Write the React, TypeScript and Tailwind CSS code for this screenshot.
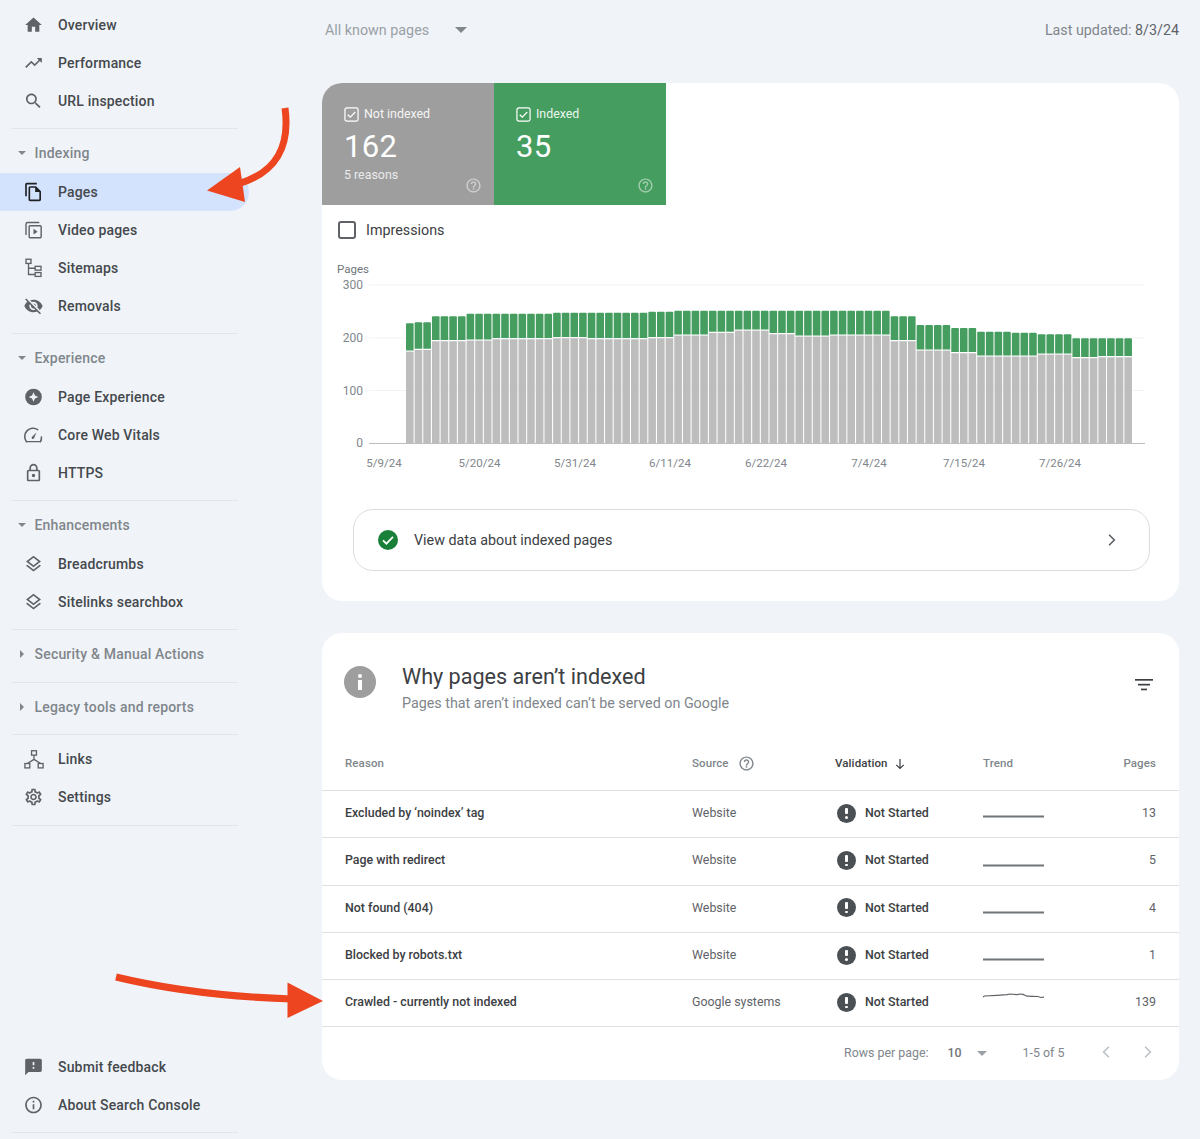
import React from "react";

const P: Record<string, string> = {
  home: "M10 20v-6h4v6h5v-8h3L12 3 2 12h3v8z",
  trend: "M16 6l2.29 2.29-4.88 4.88-4-4L2 16.59 3.41 18l6-6 4 4 6.3-6.29L22 12V6z",
  search: "M15.5 14h-.79l-.28-.27C15.41 12.59 16 11.11 16 9.5 16 5.91 13.09 3 9.5 3S3 5.91 3 9.5 5.91 16 9.5 16c1.61 0 3.09-.59 4.23-1.57l.27.28v.79l5 4.99L20.49 19l-4.99-5zm-6 0C7.01 14 5 11.99 5 9.5S7.01 5 9.5 5 14 7.01 14 9.5 11.99 14 9.5 14z",
  pages: "M16 1H4c-1.1 0-2 .9-2 2v14h2V3h12V1zm-1 4H8c-1.1 0-1.99.9-1.99 2L6 21c0 1.1.89 2 1.99 2H19c1.1 0 2-.9 2-2V11l-6-6zM8 21V7h6v5h5v9H8z",
  off: "M12 7c2.76 0 5 2.24 5 5 0 .65-.13 1.26-.36 1.83l2.92 2.92c1.51-1.26 2.7-2.89 3.43-4.75-1.73-4.39-6-7.5-11-7.5-1.4 0-2.74.25-3.98.7l2.16 2.16C10.74 7.13 11.35 7 12 7zM2 4.27l2.28 2.28.46.46C3.08 8.3 1.78 10.02 1 12c1.73 4.39 6 7.5 11 7.5 1.55 0 3.03-.3 4.38-.84l.42.42L19.73 22 21 20.73 3.27 3 2 4.27zM7.53 9.8l1.55 1.55c-.05.21-.08.43-.08.65 0 1.66 1.34 3 3 3 .22 0 .44-.03.65-.08l1.55 1.55c-.67.33-1.41.53-2.2.53-2.76 0-5-2.24-5-5 0-.79.2-1.53.53-2.2zm4.31-.78l3.15 3.15.02-.16c0-1.66-1.34-3-3-3l-.17.01z",
  star: "M12 2a10 10 0 100 20 10 10 0 000-20zm0 4.2l1.7 4.1 4.1 1.7-4.1 1.7-1.7 4.1-1.7-4.1-4.1-1.7 4.1-1.7z",
  lock: "M18 8h-1V6c0-2.76-2.24-5-5-5S7 3.24 7 6v2H6c-1.1 0-2 .9-2 2v10c0 1.1.9 2 2 2h12c1.1 0 2-.9 2-2V10c0-1.1-.9-2-2-2zM9 6c0-1.66 1.34-3 3-3s3 1.34 3 3v2H9V6zm9 14H6V10h12v10zm-6-3c1.1 0 2-.9 2-2s-.9-2-2-2-2 .9-2 2 .9 2 2 2z",
  layers: "M11.99 18.54l-7.37-5.73L3 14.07l9 7 9-7-1.63-1.27-7.38 5.74zM12 16l7.36-5.73L21 9l-9-7-9 7 1.63 1.27L12 16zm0-11.47L17.74 9 12 13.47 6.26 9 12 4.53z",
  gear: "M19.43 12.98c.04-.32.07-.64.07-.98 0-.34-.03-.66-.07-.98l2.11-1.65c.19-.15.24-.42.12-.64l-2-3.46c-.09-.16-.26-.25-.44-.25-.06 0-.12.01-.17.03l-2.49 1c-.52-.4-1.08-.73-1.69-.98l-.38-2.65C14.46 2.18 14.25 2 14 2h-4c-.25 0-.46.18-.49.42l-.38 2.65c-.61.25-1.17.59-1.69.98l-2.49-1c-.06-.02-.12-.03-.18-.03-.17 0-.34.09-.43.25l-2 3.46c-.13.22-.07.49.12.64l2.11 1.65c-.04.32-.07.65-.07.98 0 .33.03.66.07.98l-2.11 1.65c-.19.15-.24.42-.12.64l2 3.46c.09.16.26.25.44.25.06 0 .12-.01.17-.03l2.49-1c.52.4 1.08.73 1.69.98l.38 2.65c.03.24.24.42.49.42h4c.25 0 .46-.18.49-.42l.38-2.65c.61-.25 1.17-.59 1.69-.98l2.49 1c.06.02.12.03.18.03.17 0 .34-.09.43-.25l2-3.46c.12-.22.07-.49-.12-.64l-2.11-1.65zm-1.98-1.71c.04.31.05.52.05.73 0 .21-.02.43-.05.73l-.14 1.13.89.7 1.08.84-.7 1.21-1.27-.51-1.04-.42-.9.68c-.43.32-.84.56-1.25.73l-1.06.43-.16 1.13-.2 1.35h-1.4l-.19-1.35-.16-1.13-1.06-.43c-.43-.18-.83-.41-1.23-.71l-.91-.7-1.06.43-1.27.51-.7-1.21 1.08-.84.89-.7-.14-1.13c-.03-.31-.05-.54-.05-.74s.02-.43.05-.73l.14-1.13-.89-.7-1.08-.84.7-1.21 1.27.51 1.04.42.9-.68c.43-.32.84-.56 1.25-.73l1.06-.43.16-1.13.2-1.35h1.39l.19 1.35.16 1.13 1.06.43c.43.18.83.41 1.23.71l.91.7 1.06-.43 1.27-.51.7 1.21-1.07.85-.89.7.14 1.13zM12 8c-2.21 0-4 1.79-4 4s1.79 4 4 4 4-1.79 4-4-1.79-4-4-4zm0 6c-1.1 0-2-.9-2-2s.9-2 2-2 2 .9 2 2-.9 2-2 2z",
  feedback: "M20 2H4c-1.1 0-1.99.9-1.99 2L2 22l4-4h14c1.1 0 2-.9 2-2V4c0-1.1-.9-2-2-2zm-7 12h-2v-2h2v2zm0-4h-2V6h2v4z",
  info: "M11 7h2v2h-2zm0 4h2v6h-2zm1-9C6.48 2 2 6.48 2 12s4.48 10 10 10 10-4.48 10-10S17.52 2 12 2zm0 18c-4.41 0-8-3.59-8-8s3.59-8 8-8 8 3.59 8 8-3.59 8-8 8z",
  help: "M11 18h2v-2h-2v2zm1-16C6.48 2 2 6.48 2 12s4.48 10 10 10 10-4.48 10-10S17.52 2 12 2zm0 18c-4.41 0-8-3.59-8-8s3.59-8 8-8 8 3.59 8 8-3.59 8-8 8zm0-14c-2.21 0-4 1.79-4 4h2c0-1.1.9-2 2-2s2 .9 2 2c0 2-3 1.75-3 5h2c0-2.25 3-2.5 3-5 0-2.21-1.79-4-4-4z",
};

function Ic({ d, className, fill = "currentColor" }: { d: string; className?: string; fill?: string }) {
  return (
    <svg viewBox="0 0 24 24" className={className} fill={fill}>
      <path d={d} fillRule="evenodd" />
    </svg>
  );
}

const VideoIcon = () => (
  <svg viewBox="0 0 24 24" className="w-[20px] h-[20px] text-[#5f6368]" fill="none" stroke="currentColor" strokeWidth="1.7">
    <path d="M3 18V5a2 2 0 0 1 2-2h14" />
    <rect x="6.8" y="6.8" width="14.4" height="14.4" rx="1" />
    <path d="M12 10.5v7l5-3.500z" fill="currentColor" stroke="none" />
  </svg>
);
const SitemapIcon = () => (
  <svg viewBox="0 0 24 24" className="w-[20px] h-[20px] text-[#5f6368]" fill="none" stroke="currentColor" strokeWidth="1.6">
    <rect x="3" y="1.500" width="6" height="5" />
    <rect x="14" y="10" width="7" height="4.6" />
    <rect x="14" y="17.500" width="7" height="4.6" />
    <path d="M6 6.500V19.800H14M6 12.300H14" />
  </svg>
);
const GaugeIcon = () => (
  <svg viewBox="0 0 24 24" className="w-[20px] h-[20px] text-[#5f6368]" fill="none" stroke="currentColor" strokeWidth="1.9">
    <path d="M3.600 20A10 10 0 0 1 17 5.500M20.400 20A10 10 0 0 0 21.500 14.500" strokeLinecap="round" />
    <path d="M3.400 20H20.600" strokeWidth="1.500" />
    <path d="M10.600 13.700l5-4.800-2.700 6.400a1.600 1.600 0 1 1-2.300-1.600z" fill="currentColor" stroke="none" />
  </svg>
);
const LinksIcon = () => (
  <svg viewBox="0 0 24 24" className="w-[21px] h-[21px] text-[#5f6368]" fill="none" stroke="currentColor" strokeWidth="1.500">
    <rect x="9.200" y="2" width="5.600" height="5" />
    <rect x="1.600" y="16.600" width="5.600" height="5" />
    <rect x="16.800" y="16.600" width="5.600" height="5" />
    <path d="M12 7V11.800M4.400 16.600L12 11.800L19.600 16.600" />
  </svg>
);

function Item({ icon, label, active }: { icon: React.ReactNode; label: string; active?: boolean }) {
  return (
    <div className={`flex items-center h-[38px] w-[249px] pl-[22px] rounded-r-full ${active ? "bg-[#d3e3fd]" : ""}`}>
      <span className="w-6 h-6 shrink-0 flex items-center justify-center -translate-x-[0.5px]">{icon}</span>
      <span className="ml-3 text-[14px] font-medium tracking-[0.17px] text-[#45494d]">{label}</span>
    </div>
  );
}

function Head({ label, open }: { label: string; open?: boolean }) {
  return (
    <div className="flex items-center h-[38px] pl-[18px]">
      <span
        className={
          open
            ? "w-0 h-0 border-x-[4.5px] border-x-transparent border-t-[4.5px] border-t-[#80868b]"
            : "ml-[2px] w-0 h-0 border-y-[4.5px] border-y-transparent border-l-[4.5px] border-l-[#80868b]"
        }
      />
      <span className={`${open ? "ml-[8.500px]" : "ml-[10.500px]"} pt-px text-[14px] font-medium tracking-[0.2px] text-[#80868b]`}>{label}</span>
    </div>
  );
}

const Divider = () => <div className="ml-3 w-[226px] h-px bg-[#e3e5e8] shrink-0" />;
const ic = "w-5 h-5 text-[#5f6368]";

function Sidebar() {
  return (
    <aside className="w-[322px] shrink-0 h-full flex flex-col">
      <div className="pt-[6px] pb-[8px]">
        <Item icon={<Ic d={P.home} className={ic} />} label="Overview" />
        <Item icon={<Ic d={P.trend} className={ic} />} label="Performance" />
        <Item icon={<Ic d={P.search} className={ic} />} label="URL inspection" />
      </div>
      <Divider />
      <div className="pt-[5px] pb-2">
        <div className="mb-px"><Head label="Indexing" open /></div>
        <Item icon={<Ic d={P.pages} className="w-5 h-5 text-[#202124]" />} label="Pages" active />
        <Item icon={<VideoIcon />} label="Video pages" />
        <Item icon={<SitemapIcon />} label="Sitemaps" />
        <Item icon={<Ic d={P.off} className={ic} />} label="Removals" />
      </div>
      <Divider />
      <div className="pt-[5px] pb-2">
        <div className="mb-px"><Head label="Experience" open /></div>
        <Item icon={<Ic d={P.star} className={ic} />} label="Page Experience" />
        <Item icon={<GaugeIcon />} label="Core Web Vitals" />
        <Item icon={<Ic d={P.lock} className={ic} />} label="HTTPS" />
      </div>
      <Divider />
      <div className="pt-[5px] pb-2">
        <div className="mb-px"><Head label="Enhancements" open /></div>
        <Item icon={<Ic d={P.layers} className={ic} />} label="Breadcrumbs" />
        <Item icon={<Ic d={P.layers} className={ic} />} label="Sitelinks searchbox" />
      </div>
      <Divider />
      <div className="pt-[5px] pb-[9px]"><Head label="Security & Manual Actions" /></div>
      <Divider />
      <div className="pt-[5px] pb-2"><Head label="Legacy tools and reports" /></div>
      <Divider />
      <div className="pt-[5px] pb-[9px]">
        <Item icon={<LinksIcon />} label="Links" />
        <Item icon={<Ic d={P.gear} className={ic} />} label="Settings" />
      </div>
      <Divider />
      <div className="flex-1" />
      <div className="pb-2">
        <Item icon={<Ic d={P.feedback} className={ic} />} label="Submit feedback" />
        <Item icon={<Ic d={P.info} className={ic} />} label="About Search Console" />
      </div>
      <Divider />
      <div className="h-[6px]" />
    </aside>
  );
}

const CheckBox = () => (
  <svg viewBox="0 0 16 16" className="w-[15px] h-[15px]" fill="none" stroke="#fff">
    <rect x="1" y="1" width="14" height="14" rx="2" strokeWidth="1.3" />
    <path d="M4 8.200l2.700 2.600L12 5.300" strokeWidth="1.3" />
  </svg>
);

function Tab({ color, label, value, sub }: { color: string; label: string; value: string; sub?: string }) {
  return (
    <div className={`w-[172px] h-[122px] pl-[22px] pr-[12px] pt-[23px] text-white flex flex-col ${color}`}>
      <div className="flex items-center gap-[5px] h-[16px]">
        <CheckBox />
        <span className="text-[12.4px] leading-4 opacity-90">{label}</span>
      </div>
      <div className="text-[31px] leading-[36px] mt-[7px] tracking-[0.3px]">{value}</div>
      <div className="flex justify-between mt-px">
        <span className="text-[12.4px] leading-[20px] opacity-80 -mt-px">{sub ?? "\u00a0"}</span>
        <Ic d={P.help} className="w-[17px] h-[17px] text-white opacity-50 mt-[11px]" />
      </div>
    </div>
  );
}

const bars: [number, number][] = [];
const spec: [number, number, number][] = [
  [1, 70, 153], [2, 67, 148], [4, 49, 122], [3, 41, 120], [7, 41, 116], [4, 38, 113], [5, 38, 116],
  [2, 38, 116], [3, 35, 113], [4, 32, 105], [3, 32, 97], [4, 32, 90], [3, 32, 101], [4, 32, 108], [7, 32, 105],
  [3, 49, 122], [4, 75, 150], [3, 84, 158], [4, 95, 168], [3, 98, 168], [4, 103, 162], [3, 115, 173], [4, 115, 170],
];
spec.forEach(([n, g, t]) => {
  for (let i = 0; i < n; i++) bars.push([300 + g / 3, 300 + t / 3]);
});

const dates: [number, string][] = [
  [384, "5/9/24"], [479.5, "5/20/24"], [575, "5/31/24"], [670, "6/11/24"],
  [766, "6/22/24"], [869, "7/4/24"], [964, "7/15/24"], [1060, "7/26/24"],
];

function Chart() {
  return (
    <svg viewBox="322 255 857 225" className="w-[857px] h-[225px] block" style={{ fontFamily: "Roboto, sans-serif" }}>
      <text x="337" y="272.500" fontSize="11.500" fill="#70757a">Pages</text>
      {[[285, "300"], [338, "200"], [390.5, "100"]].map(([y, l]) => (
        <g key={l as string}>
          <line x1="369" x2="1145" y1={y as number} y2={y as number} stroke="#f1f3f4" />
          <text x="363" y={(y as number) + 4} fontSize="12" textAnchor="end" fill="#80868b">{l}</text>
        </g>
      ))}
      <text x="363" y="447" fontSize="12" textAnchor="end" fill="#80868b">0</text>
      {bars.map(([g, t], i) => {
        const x = 406 + i * 8.655;
        return (
          <g key={i}>
            <path d={`M${x} ${t - 0.6}V${g + 1}q0-1 1-1h5.6q1 0 1 1V${t - 0.6}z`} fill="#459e5f" />
            <rect x={x} y={t + 0.6} width="7.6" height={443 - t - 0.6} fill="#bdbdbd" />
          </g>
        );
      })}
      <line x1="369" x2="1145" y1="443.5" y2="443.5" stroke="#bdbdbd" />
      {dates.map(([x, l]) => (
        <text key={l} x={x} y="467" fontSize="11.500" textAnchor="middle" fill="#80868b">{l}</text>
      ))}
    </svg>
  );
}

const rows = [
  ["Excluded by \u2018noindex\u2019 tag", "Website", "13", 0],
  ["Page with redirect", "Website", "5", 1],
  ["Not found (404)", "Website", "4", 1],
  ["Blocked by robots.txt", "Website", "1", 1],
  ["Crawled - currently not indexed", "Google systems", "139", 2],
] as const;

function Spark({ kind }: { kind: number }) {
  return (
    <svg viewBox="0 0 62 24" className="w-[62px] h-6 block">
      {kind === 2 ? (
        <polyline
          points="0,6 1.500,5 14,4.300 24,3.600 27,3 34,3.600 37,3 40,3.400 44,5.200 50,5.300 55,5.500 58,6.500 61,6.200"
          fill="none"
          stroke="#5f6368"
          strokeWidth="1.200"
        />
      ) : (
        <line x1="0" x2="61" y1={kind === 0 ? 15.5 : 16.5} y2={kind === 0 ? 15.5 : 16.5} stroke="#70757a" strokeWidth="1.800" />
      )}
    </svg>
  );
}

const grid = "grid grid-cols-[347px_143px_148px_1fr_auto] items-center pl-[23px] pr-[23px]";

function Table() {
  return (
    <div>
      <div className={`${grid} h-[51px] pb-[3px] border-b border-[#e0e0e0] text-[11.5px] font-medium tracking-[0.1px] text-[#80868b]`}>
        <span>Reason</span>
        <span className="flex items-center gap-[9px]">Source<Ic d={P.help} className="w-[17px] h-[17px] text-[#80868b]" /></span>
        <span className="flex items-center gap-[6px] text-[#3c4043]">
          Validation
          <svg viewBox="0 0 12 12" className="w-3 h-3" fill="none" stroke="#3c4043" strokeWidth="1.200"><path d="M6 1v9.500M2.300 6.800L6 10.500l3.700-3.700" /></svg>
        </span>
        <span>Trend</span>
        <span>Pages</span>
      </div>
      {rows.map(([reason, src, n, k]) => (
        <div key={reason} className={`${grid} h-[47.3px] pb-[1.5px] border-b border-[#e0e0e0] text-[12.4px]`}>
          <span className="font-medium text-[#3c4043]">{reason}</span>
          <span className="text-[#5f6368]">{src}</span>
          <span className="flex items-center gap-[9px] font-medium text-[#3c4043]">
            <span className="ml-[2px] w-[19px] h-[19px] rounded-full bg-[#4b5054] text-white flex items-center justify-center">
              <span className="w-[2.5px] h-[11px] flex flex-col justify-between">
                <span className="h-[6.5px] bg-white rounded-[1px]" />
                <span className="h-[2.5px] bg-white rounded-full" />
              </span>
            </span>
            Not Started
          </span>
          <Spark kind={k} />
          <span className="text-[#5f6368] text-right">{n}</span>
        </div>
      ))}
      <div className="flex items-center h-[52px] text-[12.4px] text-[#80868b]">
        <span className="ml-[522px]">Rows per page:</span>
        <span className="ml-[19px] text-[#70757a] font-medium">10</span>
        <span className="ml-[15px] w-0 h-0 border-x-[5.5px] border-x-transparent border-t-[5.5px] border-t-[#9aa0a6]" />
        <span className="ml-[36px]">1-5 of 5</span>
        <svg viewBox="0 0 12 12" className="ml-[35px] w-[14px] h-[14px] -mt-[2px]" fill="none" stroke="#bdc1c6" strokeWidth="1.400"><path d="M8.500 1.500L4 6l4.500 4.500" /></svg>
        <svg viewBox="0 0 12 12" className="ml-[28px] w-[14px] h-[14px] -mt-[2px]" fill="none" stroke="#bdc1c6" strokeWidth="1.400"><path d="M3.500 1.500L8 6l-4.500 4.500" /></svg>
      </div>
    </div>
  );
}

function Main() {
  return (
    <main className="w-[857px] shrink-0">
      <div className="h-[83px] flex justify-between pt-[20px] text-[14.3px] leading-5">
        <span className="flex items-start pl-[3px] text-[#9aa0a6]">
          All known pages
          <span className="ml-[26px] mt-[7px] w-0 h-0 border-x-[6px] border-x-transparent border-t-[6px] border-t-[#80868b]" />
        </span>
        <span className="text-[#80868b]">Last updated: <span className="text-[#5f6368]">8/3/24</span></span>
      </div>
      <section className="h-[518px] bg-white rounded-[20px] overflow-hidden">
        <div className="flex">
          <Tab color="bg-[#9e9e9e]" label="Not indexed" value="162" sub="5 reasons" />
          <Tab color="bg-[#459e5f]" label="Indexed" value="35" />
        </div>
        <div className="h-[50px] flex items-center pl-4">
          <span className="w-[18px] h-[18px] rounded-[3px] border-2 border-[#5f6368]" />
          <span className="ml-[10px] pt-px text-[14.3px] text-[#3c4043]">Impressions</span>
        </div>
        <Chart />
        <div className="mt-[29px] ml-[31px] mr-[29px] h-[62px] rounded-[20px] border border-[#dadce0] flex items-center pl-[24px] pr-[30px]">
          <svg viewBox="0 0 20 20" className="w-5 h-5">
            <circle cx="10" cy="10" r="10" fill="#188038" />
            <path d="M5 10.400l3.400 3.300L15 6.800" fill="none" stroke="#fff" strokeWidth="1.800" />
          </svg>
          <span className="ml-[16px] pt-px text-[14.3px] text-[#3c4043]">View data about indexed pages</span>
          <svg viewBox="0 0 12 12" className="ml-auto w-[14px] h-[14px]" fill="none" stroke="#5f6368" strokeWidth="1.400"><path d="M3.500 1.500L8 6l-4.500 4.500" /></svg>
        </div>
      </section>
      <section className="mt-[32px] h-[447px] bg-white rounded-[20px] overflow-hidden">
        <div className="h-[107px] flex pl-[22px] pr-[25px] pt-[32px]">
          <div className="w-8 h-8 mt-px rounded-full bg-[#9e9e9e] flex flex-col items-center justify-center gap-[2px] shrink-0">
            <span className="w-[3.5px] h-[3.5px] bg-white rounded-full" />
            <span className="w-[3.5px] h-[10px] bg-white" />
          </div>
          <div className="ml-[26px] -mt-[1px]">
            <div className="text-[21.6px] leading-[26px] text-[#3c4043]">Why pages aren{"\u2019"}t indexed</div>
            <div className="text-[14.3px] leading-[24px] text-[#80868b] mt-[1px]">Pages that aren{"\u2019"}t indexed can{"\u2019"}t be served on Google</div>
          </div>
          <svg viewBox="0 0 20 14" className="ml-auto mt-[13px] w-5 h-[14px]" fill="#3c4043">
            <rect x="1" y="1" width="18" height="1.700" />
            <rect x="4" y="5.800" width="12" height="1.700" />
            <rect x="7" y="10.600" width="6" height="1.700" />
          </svg>
        </div>
        <Table />
      </section>
    </main>
  );
}

function Arrows() {
  return (
    <>
      <svg viewBox="0 0 100 110" className="absolute left-[200px] top-[100px] w-[100px] h-[110px]">
        <path d="M85 8C90 45 78 72 38 84" fill="none" stroke="#ec4520" strokeWidth="7" />
        <path d="M7 90.500L40 67L45 102z" fill="#ec4520" />
      </svg>
      <svg viewBox="0 0 220 60" className="absolute left-[110px] top-[970px] w-[220px] h-[60px]">
        <path d="M6 7C60 20 120 27 182 29" fill="none" stroke="#ec4520" strokeWidth="7" />
        <path d="M177.500 12.500L213 31L177.500 48z" fill="#ec4520" />
      </svg>
    </>
  );
}

export default function App() {
  return (
    <div className="relative w-[1200px] h-[1139px] overflow-hidden bg-[#f0f4f9] flex" style={{ fontFamily: "Roboto, 'Noto Sans', sans-serif" }}>
      <Sidebar />
      <Main />
      <Arrows />
    </div>
  );
}
